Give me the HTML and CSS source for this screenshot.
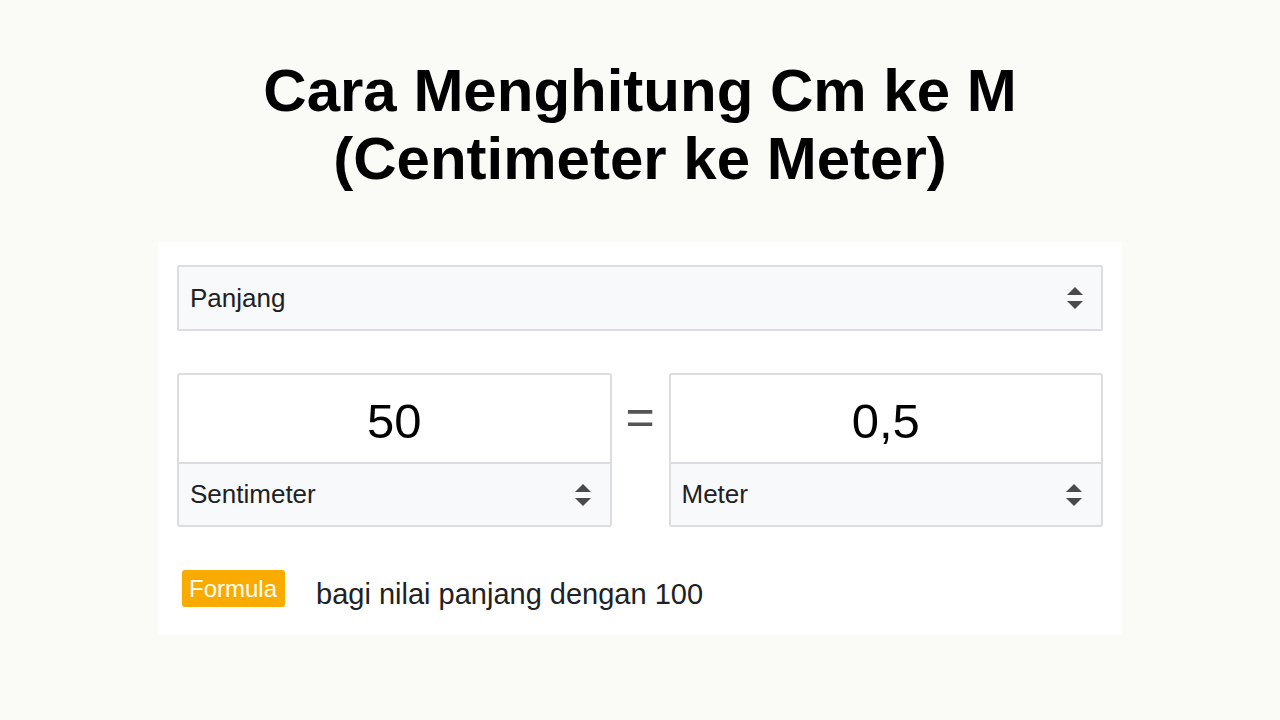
FILE: index.html
```html
<!DOCTYPE html>
<html lang="id">
<head>
  <meta charset="UTF-8" />
  <meta name="viewport" content="width=device-width, initial-scale=1.0" />
  <title>Cara Menghitung Cm ke M</title>
  <link rel="stylesheet" href="styles.css">
</head>
<body>
  <h1 class="title">Cara Menghitung Cm ke M<br>(Centimeter ke Meter)</h1>

  <div class="card">
    <div class="select select-main">
      <span>Panjang</span>
      <svg class="arrows" width="18" height="26" viewBox="0 0 18 26"><path d="M1 10 L9 2 L17 10 Z M1 16 L17 16 L9 24 Z" fill="#4a4a4a"/></svg>
    </div>

    <div class="converter">
      <div class="unit-box">
        <div class="value">50</div>
        <div class="select">
          <span>Sentimeter</span>
          <svg class="arrows" width="18" height="26" viewBox="0 0 18 26"><path d="M1 10 L9 2 L17 10 Z M1 16 L17 16 L9 24 Z" fill="#4a4a4a"/></svg>
        </div>
      </div>
      <div class="equals">=</div>
      <div class="unit-box">
        <div class="value">0,5</div>
        <div class="select">
          <span>Meter</span>
          <svg class="arrows" width="18" height="26" viewBox="0 0 18 26"><path d="M1 10 L9 2 L17 10 Z M1 16 L17 16 L9 24 Z" fill="#4a4a4a"/></svg>
        </div>
      </div>
    </div>

    <div class="formula">
      <span class="badge">Formula</span>
      <span class="formula-text">bagi nilai panjang dengan 100</span>
    </div>
  </div>
</body>
</html>
```

FILE: styles.css
```css
body {
  font-family: "Liberation Sans", Arial, sans-serif;
  margin: 0;
  padding: 0;
  background-color: #fafaf7;
  color: #202124;
}

.title {
  margin: 57px 0 0;
  text-align: center;
  font-size: 60px;
  line-height: 68px;
  font-weight: bold;
  color: #000;
}

.card {
  width: 964px;
  box-sizing: border-box;
  margin: 49px auto 0;
  padding: 23px 19px 28px;
  background-color: #fff;
}

.select {
  display: flex;
  align-items: center;
  justify-content: space-between;
  background-color: #f8f9fa;
  font-size: 26px;
  padding: 0 18px 0 11px;
}

.select-main {
  height: 66px;
  box-sizing: border-box;
  border: 2px solid #dcdde0;
  border-radius: 2px;
  padding-right: 17px;
}

.arrows {
  display: block;
}

.converter {
  display: grid;
  grid-template-columns: 1fr 57px 1fr;
  margin-top: 42px;
}

.unit-box {
  border: 2px solid #dcdde0;
  border-radius: 3px;
  height: 154px;
  box-sizing: border-box;
  display: flex;
  flex-direction: column;
}

.value {
  height: 89px;
  display: flex;
  align-items: center;
  justify-content: center;
  font-size: 49px;
  color: #000;
  border-bottom: 2px solid #dcdde0;
  padding-top: 4px;
  box-sizing: border-box;
}

.unit-box .select {
  flex: 1;
}

.equals {
  text-align: center;
  font-size: 50px;
  line-height: 50px;
  color: #555;
  padding-top: 19px;
}

.formula {
  display: flex;
  align-items: flex-start;
  height: 37px;
  margin-top: 43px;
  padding-left: 5px;
}

.badge {
  background-color: #f9ab00;
  color: #fff;
  font-size: 24px;
  line-height: 37px;
  padding: 0 8px 0 7px;
  border-radius: 3px;
}

.formula-text {
  display: block;
  margin-left: 31px;
  font-size: 29px;
  line-height: 37px;
  padding-top: 6px;
  color: #202124;
}
```
